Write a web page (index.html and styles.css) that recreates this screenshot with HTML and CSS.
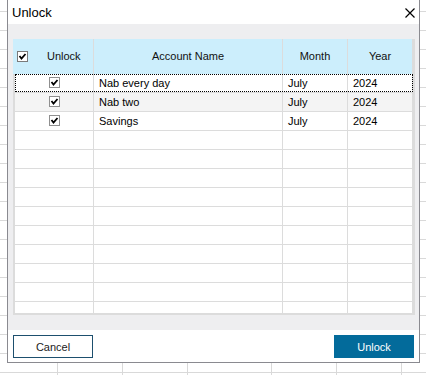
FILE: index.html
```html
<!DOCTYPE html>
<html lang="en">
<head>
    <meta charset="UTF-8">
    <title>Unlock</title>
    <link rel="stylesheet" href="styles.css">
</head>
<body>
    <div class="dialog">
        <div class="titlebar">
            <span class="title">Unlock</span>
            <svg class="close" width="10" height="10" viewBox="0 0 10 10"><path d="M0.5 0.5 L9.5 9.5 M9.5 0.5 L0.5 9.5" stroke="#000" stroke-width="1.2" fill="none"/></svg>
        </div>

        <div class="content">
            <div class="grid">
                <div class="head">
                    <div class="cell c1">
                        <svg class="check" width="11" height="11" viewBox="0 0 11 11"><rect x="0.5" y="0.5" width="10" height="10" fill="#fff" stroke="#7a7a7a"/><polyline points="2.5,5 4.5,7.5 8.5,3" fill="none" stroke="#000" stroke-width="1.8"/></svg>
                        <span class="head-label">Unlock</span>
                    </div>
                    <div class="cell c2">Account Name</div>
                    <div class="cell c3">Month</div>
                    <div class="cell c4">Year</div>
                </div>

                <div class="rows">
                    <div class="row focus">
                        <div class="cell c1"><svg class="check" width="11" height="11" viewBox="0 0 11 11"><rect x="0.5" y="0.5" width="10" height="10" fill="#fff" stroke="#8f8f8f"/><polyline points="2.5,5 4.5,7.5 8.5,3" fill="none" stroke="#000" stroke-width="1.8"/></svg></div>
                        <div class="cell c2">Nab every day</div>
                        <div class="cell c3">July</div>
                        <div class="cell c4">2024</div>
                    </div>
                    <div class="row alt">
                        <div class="cell c1"><svg class="check" width="11" height="11" viewBox="0 0 11 11"><rect x="0.5" y="0.5" width="10" height="10" fill="#fff" stroke="#8f8f8f"/><polyline points="2.5,5 4.5,7.5 8.5,3" fill="none" stroke="#000" stroke-width="1.8"/></svg></div>
                        <div class="cell c2">Nab two</div>
                        <div class="cell c3">July</div>
                        <div class="cell c4">2024</div>
                    </div>
                    <div class="row">
                        <div class="cell c1"><svg class="check" width="11" height="11" viewBox="0 0 11 11"><rect x="0.5" y="0.5" width="10" height="10" fill="#fff" stroke="#8f8f8f"/><polyline points="2.5,5 4.5,7.5 8.5,3" fill="none" stroke="#000" stroke-width="1.8"/></svg></div>
                        <div class="cell c2">Savings</div>
                        <div class="cell c3">July</div>
                        <div class="cell c4">2024</div>
                    </div>
                    <div class="row"><div class="cell c1"></div><div class="cell c2"></div><div class="cell c3"></div><div class="cell c4"></div></div>
                    <div class="row"><div class="cell c1"></div><div class="cell c2"></div><div class="cell c3"></div><div class="cell c4"></div></div>
                    <div class="row"><div class="cell c1"></div><div class="cell c2"></div><div class="cell c3"></div><div class="cell c4"></div></div>
                    <div class="row"><div class="cell c1"></div><div class="cell c2"></div><div class="cell c3"></div><div class="cell c4"></div></div>
                    <div class="row"><div class="cell c1"></div><div class="cell c2"></div><div class="cell c3"></div><div class="cell c4"></div></div>
                    <div class="row"><div class="cell c1"></div><div class="cell c2"></div><div class="cell c3"></div><div class="cell c4"></div></div>
                    <div class="row"><div class="cell c1"></div><div class="cell c2"></div><div class="cell c3"></div><div class="cell c4"></div></div>
                    <div class="row"><div class="cell c1"></div><div class="cell c2"></div><div class="cell c3"></div><div class="cell c4"></div></div>
                    <div class="row"><div class="cell c1"></div><div class="cell c2"></div><div class="cell c3"></div><div class="cell c4"></div></div>
                    <div class="row"><div class="cell c1"></div><div class="cell c2"></div><div class="cell c3"></div><div class="cell c4"></div></div>
                </div>
            </div>
        </div>

        <div class="footer">
            <button class="btn cancel">Cancel</button>
            <button class="btn primary">Unlock</button>
        </div>
    </div>
</body>
</html>
```

FILE: styles.css
```css
* {
    margin: 0;
    padding: 0;
    box-sizing: border-box;
    font-family: "Liberation Sans", Arial, sans-serif;
}

body {
    width: 426px;
    height: 375px;
    overflow: hidden;
    background-color: #fff;
    background-image:
        repeating-linear-gradient(to bottom, transparent 0 11px, #d9d9d9 11px 12px, transparent 12px 19px),
        linear-gradient(#d9d9d9, #d9d9d9),
        linear-gradient(#d9d9d9, #d9d9d9),
        linear-gradient(#d9d9d9, #d9d9d9),
        linear-gradient(#d9d9d9, #d9d9d9),
        linear-gradient(#d9d9d9, #d9d9d9),
        linear-gradient(#d9d9d9, #d9d9d9);
    background-size: 100% 100%, 1px 100%, 1px 100%, 1px 100%, 1px 100%, 1px 100%, 1px 100%;
    background-position: 0 0, 57px 0, 122px 0, 187px 0, 271px 0, 336px 0, 401px 0;
    background-repeat: no-repeat;
}

.dialog {
    margin-left: 7px;
    width: 413px;
    height: 363px;
    background: #fff;
    border: 1px solid #8a8a90;
    border-top: none;
    display: flex;
    flex-direction: column;
}

.titlebar {
    height: 24px;
    display: flex;
    align-items: center;
    justify-content: space-between;
    padding: 0 4px 0 4px;
}

.title {
    font-size: 13px;
    color: #000;
}

.close {
    display: block;
    margin-top: 1px;
}

.content {
    height: 306px;
    background: #eeeef0;
    padding: 15px 4px 0 5px;
}

.grid {
    width: 402px;
    border-right: 2px solid #dcdcdc;
    border-bottom: 2px solid #dcdcdc;
    background: #fff;
}

.cell {
    font-size: 11px;
    color: #000;
    border-right: 1px solid #dcdcdc;
    white-space: nowrap;
    overflow: hidden;
}

.c1 { width: 81px; }
.c2 { width: 189px; }
.c3 { width: 65px; }
.c4 { width: 65px; }

.head {
    display: flex;
    height: 35px;
    background: #cceefc;
}

.head .cell {
    line-height: 35px;
    text-align: center;
    color: #111;
}

.head .c1 {
    display: flex;
    align-items: center;
    padding-left: 4px;
}

.head-label {
    margin-left: 19px;
}

.rows {
    height: 239px;
    overflow: hidden;
    border-left: 2px solid #dcdcdc;
}

.row {
    display: flex;
    height: 19px;
    position: relative;
}

.row .cell {
    height: 19px;
    line-height: 18px;
    border-bottom: 1px solid #dcdcdc;
    padding-left: 5px;
}

.row .c1 {
    width: 79px;
    padding-left: 0;
    display: flex;
    justify-content: center;
    align-items: center;
    padding-bottom: 1px;
}

.row.alt {
    background: #f4f4f4;
}

.row.focus::after {
    content: "";
    position: absolute;
    left: 0;
    top: 0;
    right: 0;
    bottom: 1px;
    border: 1px dotted #000;
}

.check {
    display: block;
}

.footer {
    flex: 1;
    display: flex;
    justify-content: space-between;
    align-items: flex-start;
    padding: 5px 5px 0 5px;
}

.btn {
    width: 80px;
    height: 23px;
    font-size: 11px;
    cursor: pointer;
}

.cancel {
    background: #fff;
    border: 1px solid #1d4f6e;
    color: #222;
}

.primary {
    background: #036b9b;
    border: none;
    color: #fff;
}
```
